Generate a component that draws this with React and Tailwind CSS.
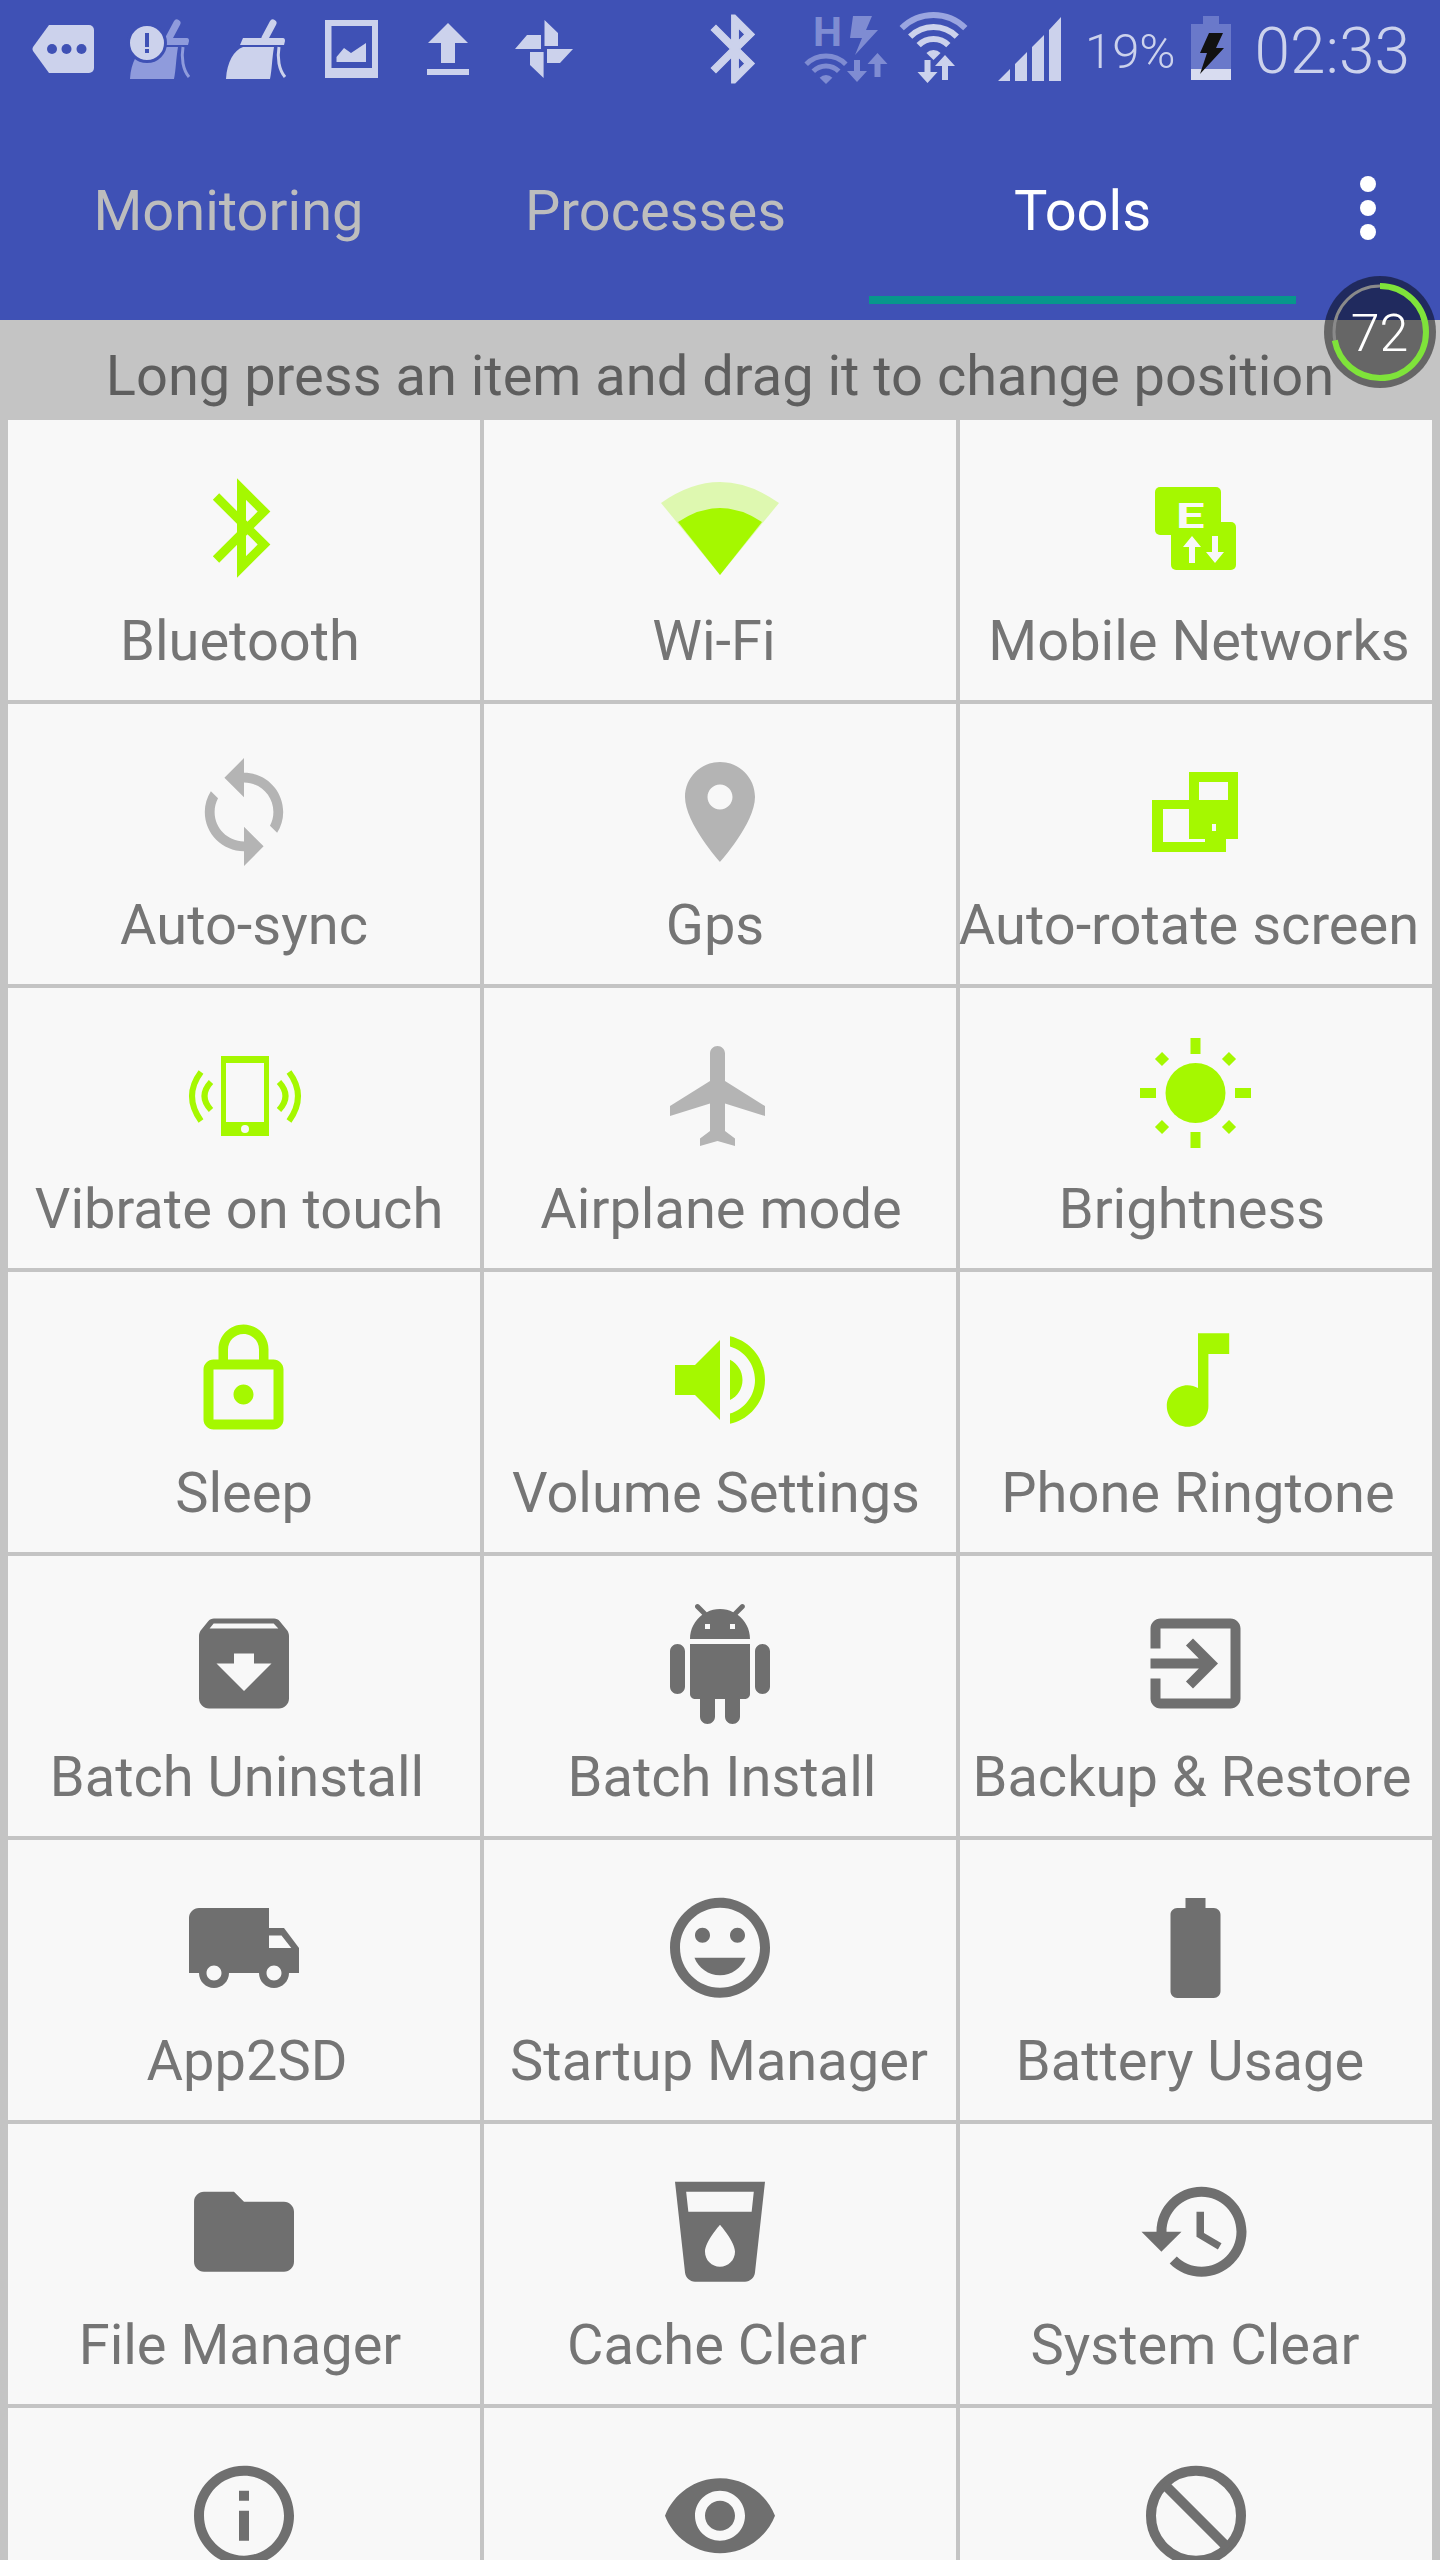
const G = "#a5f800", L = "#b4b4b4", D = "#6f6f6f";
const P = {
  sync: "M12 4V1L8 5l4 4V6c3.31 0 6 2.69 6 6 0 1.01-.25 1.97-.7 2.8l1.46 1.46C19.54 15.03 20 13.57 20 12c0-4.42-3.58-8-8-8zm0 14c-3.31 0-6-2.69-6-6 0-1.01.25-1.97.7-2.8L5.24 7.74C4.46 8.97 4 10.43 4 12c0 4.42 3.58 8 8 8v3l4-4-4-4v3z",
  pin: "M12 2C8.13 2 5 5.13 5 9c0 5.25 7 13 7 13s7-7.75 7-13c0-3.87-3.13-7-7-7zm0 9.5c-1.38 0-2.5-1.12-2.5-2.5s1.12-2.5 2.5-2.5 2.5 1.12 2.5 2.5-1.12 2.5-2.5 2.5z",
  plane: "M21 16v-2l-8-5V3.5c0-.83-.67-1.5-1.5-1.5S10 2.67 10 3.5V9l-8 5v2l8-2.5V19l-2 1.5V22l3.5-1 3.5 1v-1.5L13 19v-5.5l8 2.5z",
  lock: "M12 17c1.1 0 2-.9 2-2s-.9-2-2-2-2 .9-2 2 .9 2 2 2zm6-9h-1V6c0-2.76-2.24-5-5-5S7 3.24 7 6v2H6c-1.1 0-2 .9-2 2v10c0 1.1.9 2 2 2h12c1.1 0 2-.9 2-2V10c0-1.1-.9-2-2-2zM8.9 6c0-1.71 1.39-3.1 3.1-3.1s3.1 1.39 3.1 3.1v2H8.9V6zM18 20H6V10h12v10z",
  volume: "M3 9v6h4l5 5V4L7 9H3zm13.5 3c0-1.77-1.02-3.29-2.5-4.03v8.05c1.48-.73 2.5-2.25 2.5-4.02zM14 3.23v2.06c2.89.86 5 3.54 5 6.71s-2.11 5.85-5 6.71v2.06c4.01-.91 7-4.49 7-8.77s-2.99-7.86-7-8.77z",
  note: "M12 3v10.55c-.59-.34-1.27-.55-2-.55-2.21 0-4 1.79-4 4s1.79 4 4 4 4-1.79 4-4V7h4V3h-6z",
  archive: "M20.54 5.23l-1.39-1.68C18.88 3.21 18.47 3 18 3H6c-.47 0-.88.21-1.16.55L3.46 5.23C3.17 5.57 3 6.02 3 6.5V19c0 1.1.9 2 2 2h14c1.1 0 2-.9 2-2V6.5c0-.48-.17-.93-.46-1.27zM12 17.5L6.5 12H10v-2h4v2h3.5L12 17.5zM5.12 5l.81-1h12l.94 1H5.12z",
  android: "M6 18c0 .55.45 1 1 1h1v3.5c0 .83.67 1.5 1.5 1.5s1.5-.67 1.5-1.5V19h2v3.5c0 .83.67 1.5 1.5 1.5s1.5-.67 1.5-1.5V19h1c.55 0 1-.45 1-1V8H6v10zM3.5 8C2.67 8 2 8.67 2 9.5v7c0 .83.67 1.5 1.5 1.5S5 17.33 5 16.5v-7C5 8.67 4.33 8 3.5 8zm17 0c-.83 0-1.5.67-1.5 1.5v7c0 .83.67 1.5 1.5 1.5s1.5-.67 1.5-1.5v-7c0-.83-.67-1.5-1.5-1.5zm-4.97-5.84l1.3-1.3c.2-.2.2-.51 0-.71-.2-.2-.51-.2-.71 0l-1.48 1.48C13.85 1.23 12.95 1 12 1c-.96 0-1.86.23-2.66.63L7.85.15c-.2-.2-.51-.2-.71 0-.2.2-.2.51 0 .71l1.31 1.31C6.97 3.26 6 5.01 6 7h12c0-1.99-.97-3.75-2.47-4.84zM10 5H9V4h1v1zm5 0h-1V4h1v1z",
  exit: "M10.09 15.59L11.5 17l5-5-5-5-1.41 1.41L12.67 11H3v2h9.67l-2.58 2.59zM19 3H5c-1.11 0-2 .9-2 2v4h2V5h14v14H5v-4H3v4c0 1.1.89 2 2 2h14c1.1 0 2-.9 2-2V5c0-1.1-.9-2-2-2z",
  truck: "M20 8h-3V4H3c-1.1 0-2 .9-2 2v11h2c0 1.66 1.34 3 3 3s3-1.34 3-3h6c0 1.66 1.34 3 3 3s3-1.34 3-3h2v-5l-3-4zM6 18.5c-.83 0-1.5-.67-1.5-1.5s.67-1.5 1.5-1.5 1.5.67 1.5 1.5-.67 1.5-1.5 1.5zm13.5-9l1.96 2.5H17V9.5h2.5zm-1.5 9c-.83 0-1.5-.67-1.5-1.5s.67-1.5 1.5-1.5 1.5.67 1.5 1.5-.67 1.5-1.5 1.5z",
  face: "M11.99 2C6.47 2 2 6.48 2 12s4.47 10 9.99 10C17.52 22 22 17.52 22 12S17.52 2 11.99 2zM12 20c-4.42 0-8-3.58-8-8s3.58-8 8-8 8 3.58 8 8-3.58 8-8 8zm3.5-9c.83 0 1.5-.67 1.5-1.5S16.33 8 15.5 8 14 8.67 14 9.5s.67 1.5 1.5 1.5zm-7 0c.83 0 1.5-.67 1.5-1.5S9.33 8 8.5 8 7 8.67 7 9.5 7.67 11 8.5 11zm3.5 6.5c2.33 0 4.31-1.46 5.11-3.5H6.89c.8 2.04 2.78 3.5 5.11 3.5z",
  battery: "M15.67 4H14V2h-4v2H8.33C7.6 4 7 4.6 7 5.33v15.33C7 21.4 7.6 22 8.33 22h7.33c.74 0 1.34-.6 1.34-1.33V5.33C17 4.6 16.4 4 15.67 4z",
  folder: "M10 4H4c-1.1 0-1.99.9-1.99 2L2 18c0 1.1.9 2 2 2h16c1.1 0 2-.9 2-2V8c0-1.1-.9-2-2-2h-8l-2-2z",
  drink: "M3 2l2.01 18.23C5.13 21.23 5.97 22 7 22h10c1.03 0 1.87-.77 1.99-1.77L21 2H3zm9 17c-1.66 0-3-1.34-3-3 0-2 3-5.4 3-5.4s3 3.4 3 5.4c0 1.66-1.34 3-3 3zm6.33-11H5.67l-.44-4h13.53l-.43 4z",
  history: "M13 3c-4.97 0-9 4.03-9 9H1l3.89 3.89.07.14L9 12H6c0-3.87 3.13-7 7-7s7 3.13 7 7-3.13 7-7 7c-1.93 0-3.68-.79-4.94-2.06l-1.42 1.42C8.27 19.99 10.51 21 13 21c4.97 0 9-4.03 9-9s-4.03-9-9-9zm-1 5v5l4.28 2.54.72-1.21-3.5-2.08V8H12z",
  info: "M11 17h2v-6h-2v6zm1-15C6.48 2 2 6.48 2 12s4.48 10 10 10 10-4.48 10-10S17.52 2 12 2zm0 18c-4.41 0-8-3.59-8-8s3.59-8 8-8 8 3.59 8 8-3.59 8-8 8zM11 9h2V7h-2v2z",
  eye: "M12 4.5C7 4.5 2.73 7.61 1 12c1.73 4.39 6 7.5 11 7.5s9.27-3.11 11-7.5c-1.73-4.39-6-7.5-11-7.5zM12 17c-2.76 0-5-2.24-5-5s2.24-5 5-5 5 2.24 5 5-2.24 5-5 5zm0-8c-1.66 0-3 1.34-3 3s1.34 3 3 3 3-1.34 3-3-1.34-3-3-3z",
  bt: "M17.71 7.71L12 2h-1v7.59L6.41 5 5 6.41 10.59 12 5 17.59 6.41 19 11 14.41V22h1l5.71-5.71-4.3-4.29 4.3-4.29zM13 5.83l1.88 1.88L13 9.59V5.83zm1.88 10.46L13 18.17v-3.76l1.88 1.88z",
};

const M = ({ d, x = 236, y = 108, s = 5, fill = D }) => (
  <path d={d} fill={fill} transform={`translate(${x - 12 * s} ${y - 12 * s}) scale(${s})`} />
);

const icons = {
  bluetooth: (
    <path d="M208 76.5 L256 124.5 L233.5 147 L233.5 69 L256 91.5 L208 139.5" fill="none" stroke={G} strokeWidth="9" />
  ),
  wifi: (
    <>
      <path d="M236 155 L177 83 Q236 41 295 83 Z" fill="#def8b0" />
      <path d="M236 155 L194 102 Q236 74 278 102 Z" fill={G} />
    </>
  ),
  mobile: (
    <>
      <rect x="195" y="67" width="66" height="48" rx="5" fill={G} />
      <rect x="211" y="102" width="65" height="48" rx="5" fill={G} />
      <text x="0" y="0" transform="translate(216 108) scale(1.45 1)" fontSize="35" fontWeight="700" fill="#f8f8f8" fontFamily="Roboto, sans-serif">E</text>
      <path d="M232 116 L241 127 H235 V143 H229 V127 H223 Z M255 143 L264 132 H258 V116 H252 V132 H246 Z" fill="#f8f8f8" />
    </>
  ),
  sync: <M d={P.sync} y={108} s={4.9} fill={L} />,
  gps: <M d={P.pin} y={108} fill={L} />,
  rotate: (
    <>
      <path fillRule="evenodd" d="M229 68 H278 V135 H229 Z M239 78 V96 H268 V78 Z" fill={G} />
      <path fillRule="evenodd" d="M192 96 H266 V148 H192 Z M203 105 V138 H245 V105 Z" fill={G} />
      <rect x="252" y="120" width="4" height="7" fill="#f8f8f8" />
    </>
  ),
  vibrate: (
    <>
      <path fillRule="evenodd" d="M213 68 H261 V148 H213 Z M218 75 V134 H256 V75 Z" fill={G} />
      <circle cx="237" cy="141" r="4" fill="#f8f8f8" />
      <g fill="none" stroke={G} strokeWidth="6">
        <path d="M193 84 Q175 108 193 133" />
        <path d="M203 94 Q190 108 203 122" />
        <path d="M281 84 Q299 108 281 133" />
        <path d="M271 94 Q284 108 271 122" />
      </g>
    </>
  ),
  plane: <M d={P.plane} x={236} y={108} fill={L} />,
  sun: (
    <>
      <circle cx="235.5" cy="105" r="30" fill={G} />
      <g stroke={G} strokeWidth="10">
        <path d="M235.5 50 V66 M235.5 144 V160 M180 105 H196 M275 105 H291" />
        <path d="M198.5 67.5 L205.500 74.500 M272.5 67.5 L265.500 74.500 M198.5 142.500 L205.500 135.500 M272.5 142.500 L265.500 135.500" />
      </g>
    </>
  ),
  lock: <M d={P.lock} x={235.5} y={107.5} s={5} fill={G} />,
  volume: <M d={P.volume} fill={G} />,
  note: <M d={P.note} x={238} s={5.2} fill={G} />,
  archive: <M d={P.archive} y={107.5} />,
  android: <M d={P.android} />,
  exit: <M d={P.exit} x={235.5} y={107.5} />,
  truck: <M d={P.truck} />,
  face: <M d={P.face} y={107.7} />,
  battery: <M d={P.battery} x={235.500} />,
  folder: <M d={P.folder} y={107.7} />,
  drink: <M d={P.drink} y={107.7} />,
  history: <M d={P.history} x={236.5} y={107.7} />,
  info: <M d={P.info} y={107.700} />,
  eye: <M d={P.eye} y={107.700} />,
  block: (
    <>
      <circle cx="236" cy="107.7" r="45" fill="none" stroke={D} strokeWidth="10" />
      <path d="M204 76 L268 140" stroke={D} strokeWidth="10" />
    </>
  ),
};

const items = [
  ["Bluetooth", "bluetooth", "translate-x-[-4px]"],
  ["Wi-Fi", "wifi", "translate-x-[-6px]"],
  ["Mobile Networks", "mobile", "translate-x-[3px]"],
  ["Auto-sync", "sync", ""],
  ["Gps", "gps", "translate-x-[-5px]"],
  ["Auto-rotate screen", "rotate", "translate-x-[-7px]"],
  ["Vibrate on touch", "vibrate", "translate-x-[-5px]"],
  ["Airplane mode", "plane", "translate-x-[1px]"],
  ["Brightness", "sun", "translate-x-[-4px]"],
  ["Sleep", "lock", ""],
  ["Volume Settings", "volume", "translate-x-[-4px]"],
  ["Phone Ringtone", "note", "translate-x-[2px]"],
  ["Batch Uninstall", "archive", "translate-x-[-7px]"],
  ["Batch Install", "android", "translate-x-[2px]"],
  ["Backup & Restore", "exit", "translate-x-[-4px]"],
  ["App2SD", "truck", "translate-x-[3px]"],
  ["Startup Manager", "face", "translate-x-[-1px]"],
  ["Battery Usage", "battery", "translate-x-[-6px]"],
  ["File Manager", "folder", "translate-x-[-4px]"],
  ["Cache Clear", "drink", "translate-x-[-3px]"],
  ["System Clear", "history", "translate-x-[-1px]"],
  ["", "info", ""],
  ["", "eye", ""],
  ["", "block", ""],
];

const arc = (cx, cy, r) => {
  const k = r * 0.707;
  return `M${cx - k} ${cy - k} A${r} ${r} 0 0 1 ${cx + k} ${cy - k}`;
};
const wedge = (cx, cy, r) => {
  const k = r * 0.707;
  return `M${cx} ${cy} L${cx - k} ${cy - k} A${r} ${r} 0 0 1 ${cx + k} ${cy - k} Z`;
};
const down = (x, a, b) => `M${x - 3} ${a} H${x + 3} V${b - 11} H${x + 10} L${x} ${b} L${x - 10} ${b - 11} H${x - 3} Z`;
const up = (x, a, b) => `M${x} ${a} L${x + 10} ${a + 11} H${x + 3} V${b} H${x - 3} V${a + 11} H${x - 10} Z`;

const S = "#ccd2ec", Dm = "#7f8cd2";

function Broom({ dx = 0, c = S }) {
  return (
    <g transform={`translate(${dx} 0)`} fill={c}>
      <path d="M273 23 L265 38" stroke={c} strokeWidth="7" strokeLinecap="round" fill="none" />
      <path d="M243 38 H283 Q285 38 285 41 L284 45 H240 Z" />
      <path d="M226 79 C227 62 234 50 243 47 L274 47 C272 58 272 70 270 79 Z" />
      <path d="M279 47 C277 58 279 70 285 77" stroke={c} strokeWidth="3" fill="none" />
    </g>
  );
}

function StatusIcons() {
  return (
    <svg className="block w-[1080px] h-[96px] shrink-0" viewBox="0 0 1080 96">
      <path d="M49 25 H89 a5 5 0 0 1 5 5 V68 a5 5 0 0 1 -5 5 H49 L33 51 a4 4 0 0 1 0 -4 Z" fill={S} />
      <g fill="#3f51b5"><circle cx="52" cy="49" r="5" /><circle cx="66.500" cy="49" r="5" /><circle cx="81.500" cy="49" r="5" /></g>
      <Broom dx={-96} c="#8f9bdc" />
      <circle cx="147" cy="43" r="18.500" fill={S} stroke="#3f51b5" strokeWidth="3" />
      <rect x="145" y="33" width="4" height="14" fill="#3f51b5" />
      <rect x="145" y="49" width="4" height="4" fill="#3f51b5" />
      <Broom />
      <path fillRule="evenodd" d="M325 20 H378 V78 H325 Z M331.500 26 V68 H372 V26 Z" fill={S} />
      <path d="M336.500 57 L344 48 L351 53 L366 43 V62 H336.500 Z" fill={S} />
      <path d="M448 23 L468 43 H455 V63 H441 V43 H428 Z" fill={S} />
      <rect x="427" y="69" width="42" height="6" fill={S} />
      <path d="M544.500 20 L558 33 V46 H544.500 Z M515 49 L527 35 H541 V49 Z M543.600 78 L530 65 V52 H543.600 Z M573 49 L560 63 H547 V49 Z" fill={S} />
      <g stroke={S} strokeWidth="0.3">
        <M d={P.bt} x={735} y={49} s={3.4} fill={S} />
      </g>
      <text x="813" y="46" fontSize="41" fontWeight="700" fill={Dm} fontFamily="Roboto, sans-serif">H</text>
      <path d="M853 16 L872 16 L866 30 L878 30 L855 55 L862 38 L850 38 Z" fill={Dm} />
      <g fill="none" stroke={Dm} strokeWidth="5">
        <path d={arc(826, 84, 28)} />
        <path d={arc(826, 84, 18)} />
      </g>
      <path d={wedge(826, 84, 9)} fill={Dm} />
      <path d={down(857, 60, 82)} fill={Dm} />
      <path d={up(877.500, 53, 77)} fill={Dm} />
      <path d={arc(933.500, 60, 45)} fill="none" stroke="#9aa5e0" strokeWidth="6" />
      <g fill="none" stroke={S} strokeWidth="6">
        <path d={arc(933.500, 60, 33)} />
        <path d={arc(933.500, 60, 21)} />
      </g>
      <path d={wedge(933.500, 60, 10)} fill={S} />
      <path d={down(927.500, 60, 83)} fill={S} />
      <path d={up(945, 55, 80)} fill={S} />
      <path d="M998 81 L1010 69 V81 Z M1015 64 L1027 52 V81 H1015 Z M1032 47 L1044 35 V81 H1032 Z M1049 30 L1061 17 V81 H1049 Z" fill={S} />
    </svg>
  );
}

function Badge() {
  return (
    <svg className="absolute left-[1324px] top-[276px] w-[112px] h-[112px]" viewBox="0 0 112 112">
      <circle cx="56" cy="56" r="56" fill="#000" fillOpacity="0.48" />
      <circle cx="56" cy="56" r="46" fill="none" stroke="#8a8a8a" strokeWidth="3" />
      <circle cx="56" cy="56" r="46" fill="none" stroke="#7fe33a" strokeWidth="6" strokeDasharray="208 289" transform="rotate(-90 56 56)" />
      <text x="55.500" y="75" textAnchor="middle" fontSize="52" fontWeight="300" fill="#fff" fontFamily="Roboto, sans-serif">72</text>
    </svg>
  );
}

export default function App() {
  return (
    <div className="relative w-[1440px] h-[2560px] overflow-hidden bg-[#c4c4c4] [font-family:Roboto,sans-serif]">
      <header className="bg-[#3f51b5] h-[320px]">
        <div className="flex items-center h-[96px]">
          <StatusIcons />
          <span className="ml-[5px] mt-[6px] text-[49px] font-light text-[#ccd2ec] leading-none">19%</span>
          <svg className="ml-[15px] block w-[40px] h-[96px] shrink-0" viewBox="1187 0 40 96">
            <rect x="1199" y="16" width="16" height="8" fill="#6a79ca" />
            <rect x="1187" y="24" width="40" height="45" fill="#6a79ca" />
            <rect x="1187" y="69" width="40" height="11" fill="#d8dcf0" />
            <path d="M1205 33 L1219 33 L1212 48 L1220 48 L1196 74 L1203 53 L1196 53 Z" fill="#111" />
          </svg>
          <span className="ml-[24px] mt-[8px] text-[64px] font-light text-[#ccd2ec] leading-none">02:33</span>
        </div>
        <div className="flex pl-[15px] items-start">
          {["Monitoring", "Processes", "Tools"].map((t, i) => (
            <div
              key={t}
              className={
                i === 2
                  ? "w-[427px] h-[208px] pt-[30px] flex items-center justify-center border-b-8 border-[#07978b] text-white text-[56px] font-normal"
                  : "w-[427px] h-[208px] pt-[30px] flex items-center justify-center border-b-8 border-transparent text-[#bdbdbd] text-[56px] font-normal"
              }
            >
              {t}
            </div>
          ))}
          <div className="ml-[64px] mt-[80px] flex flex-col gap-2">
            <span className="block w-4 h-4 rounded-full bg-white" />
            <span className="block w-4 h-4 rounded-full bg-white" />
            <span className="block w-4 h-4 rounded-full bg-white" />
          </div>
        </div>
      </header>
      <div className="h-[100px] pt-[12px] flex items-center justify-center text-[56px] text-[#5e5e5e]">
        Long press an item and drag it to change position
      </div>
      <div className="grid grid-cols-3 gap-1 px-2">
        {items.map(([label, icon, shift], i) => (
          <div key={i} className="h-[280px] bg-[#f8f8f8] flex flex-col items-center">
            <svg className="block w-[472px] h-[191px] shrink-0" viewBox="0 0 472 191">
              {icons[icon]}
            </svg>
            {label && (
              <span className={`text-[56px] leading-[60px] text-[#757575] whitespace-nowrap ${shift}`}>{label}</span>
            )}
          </div>
        ))}
      </div>
      <Badge />
    </div>
  );
}
